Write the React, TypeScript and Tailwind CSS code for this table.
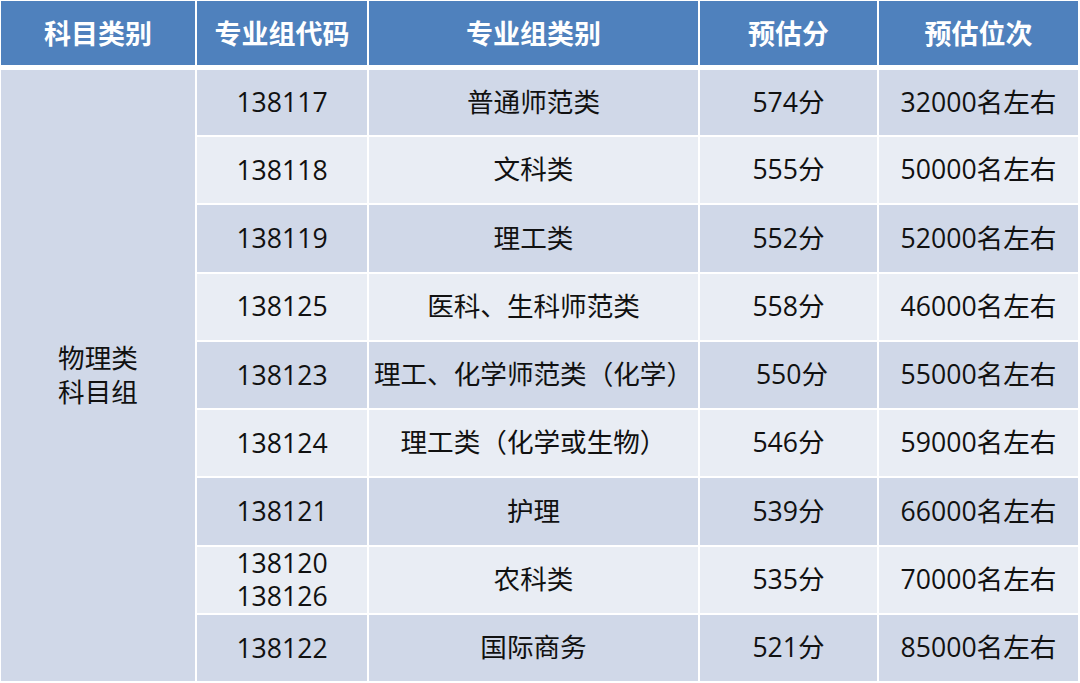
import React from "react";

const rows = [
  { code: ["138117"], type: "普通师范类", score: "574分", rank: "32000名左右" },
  { code: ["138118"], type: "文科类", score: "555分", rank: "50000名左右" },
  { code: ["138119"], type: "理工类", score: "552分", rank: "52000名左右" },
  { code: ["138125"], type: "医科、生科师范类", score: "558分", rank: "46000名左右" },
  { code: ["138123"], type: "理工、化学师范类（化学）", score: "550分", rank: "55000名左右", shift: true },
  { code: ["138124"], type: "理工类（化学或生物）", score: "546分", rank: "59000名左右" },
  { code: ["138121"], type: "护理", score: "539分", rank: "66000名左右" },
  { code: ["138120", "138126"], type: "农科类", score: "535分", rank: "70000名左右" },
  { code: ["138122"], type: "国际商务", score: "521分", rank: "85000名左右" },
];

const headers = ["科目类别", "专业组代码", "专业组类别", "预估分", "预估位次"];

export default function App() {
  return (
    <div
      className="w-[1080px] h-[683px] overflow-hidden bg-white pt-px pl-px text-[26.6px] text-[#111]"
      style={{ fontFamily: '"Open Sans", "Noto Sans CJK SC", sans-serif' }}
    >
      <div className="grid grid-cols-[194px_170px_329px_177px_199px] gap-x-[2px] h-[64px]">
        {headers.map((h) => (
          <div
            key={h}
            className="bg-[#4f81bd] text-white text-[27px] font-bold flex items-center justify-center leading-none"
          >
            {h}
          </div>
        ))}
      </div>
      <div className="mt-[5px] grid grid-cols-[194px_170px_329px_177px_199px] grid-rows-[65px_repeat(8,66.3px)] gap-[2px]">
        <div className="row-span-9 bg-[#d0d8e8] flex flex-col items-center justify-center leading-[34px] pb-[1px]">
          <span>物理类</span>
          <span>科目组</span>
        </div>
        {rows.map((r, i) => {
          const bg = i % 2 === 0 ? "bg-[#d0d8e8]" : "bg-[#e9edf4]";
          return (
            <React.Fragment key={i}>
              <div className={`${bg} flex flex-col items-center justify-center leading-[33px]`}>
                {r.code.map((c) => (
                  <span key={c}>{c}</span>
                ))}
              </div>
              <div className={`${bg} flex items-center justify-center`}>
                <span>{r.type}</span>
              </div>
              <div className={`${bg} flex items-center justify-center`}>
                <span className={r.shift ? "pl-[7px]" : ""}>{r.score}</span>
              </div>
              <div className={`${bg} flex items-center justify-center`}>
                <span>{r.rank}</span>
              </div>
            </React.Fragment>
          );
        })}
      </div>
    </div>
  );
}
